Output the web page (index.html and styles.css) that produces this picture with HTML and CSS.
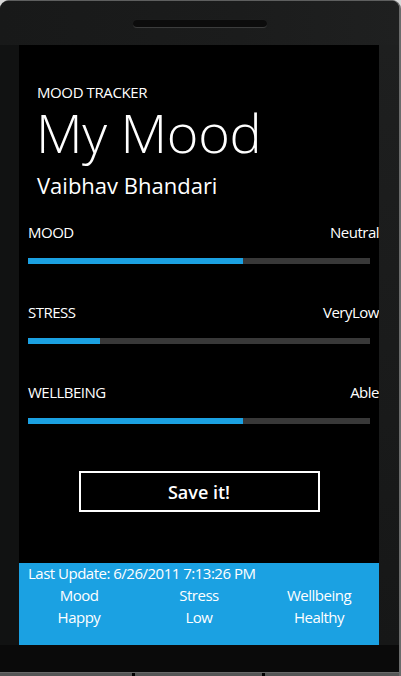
FILE: index.html
```html
<!DOCTYPE html>
<html>
<head>
<meta charset="utf-8">
<link rel="stylesheet" href="styles.css">
</head>
<body>
<div class="device">
  <div class="bezel-top"><div class="speaker"></div></div>
  <div class="middle">
    <div class="bezel-left"></div>
    <div class="screen">
      <div class="header">
        <div class="app-title">MOOD TRACKER</div>
        <div class="page-title">My Mood</div>
        <div class="subtitle">Vaibhav Bhandari</div>
      </div>
      <div class="metrics">
        <div class="metric">
          <div class="metric-row"><span>MOOD</span><span>Neutral</span></div>
          <div class="track"><div class="fill" style="width:62.9%"></div></div>
        </div>
        <div class="metric">
          <div class="metric-row"><span>STRESS</span><span>VeryLow</span></div>
          <div class="track"><div class="fill" style="width:21%"></div></div>
        </div>
        <div class="metric">
          <div class="metric-row"><span>WELLBEING</span><span>Able</span></div>
          <div class="track"><div class="fill" style="width:62.9%"></div></div>
        </div>
      </div>
      <div class="button-wrap"><button class="save">Save it!</button></div>
      <div class="status">
        <div class="updated">Last Update: 6/26/2011 7:13:26 PM</div>
        <div class="grid">
          <span>Mood</span><span>Stress</span><span>Wellbeing</span>
          <span>Happy</span><span>Low</span><span>Healthy</span>
        </div>
      </div>
    </div>
    <div class="bezel-right"></div>
  </div>
  <div class="bezel-bottom">
    <div class="bottom-edge"><span class="notch n1"></span><span class="notch n2"></span></div>
  </div>
</div>
</body>
</html>
```
FILE: styles.css
```css
* { box-sizing: border-box; }
html, body { margin: 0; padding: 0; background: #d9d9d9; }
body { width: 401px; height: 676px; overflow: hidden; font-family: "Open Sans", "Noto Sans", sans-serif; color: #fff; }

.device {
  width: 401px; height: 676px;
  display: flex; flex-direction: column;
  background: #0a0a0a;
  border-radius: 9px 9px 0 0;
  border-top: 1px solid #5e5f5f;
  border-right: 2px solid #6a6b6b;
  overflow: hidden;
}
.bezel-top {
  height: 44px;
  background: linear-gradient(90deg, #181919 0%, #1b1c1c 60%, #1f2020 100%);
  display: flex; justify-content: center; align-items: flex-start;
}
.speaker {
  margin-top: 19px;
  width: 134px; height: 8px;
  border-radius: 4px;
  background: #0c0c0c;
  border-bottom: 1px solid #3c3d3d;
  box-shadow: 0 0 1px #2a2a2a;
}
.middle { display: flex; height: 600px; }
.bezel-left { width: 19px; background: #111212; }
.bezel-right { flex: 1; background: linear-gradient(180deg, #1e1f1f 0%, #161717 100%); }

.screen {
  width: 360px; height: 600px;
  background: #000;
  display: flex; flex-direction: column;
  overflow: hidden;
}
.header { padding: 37px 0 0 18px; }
.app-title { font-size: 15px; line-height: 20px; letter-spacing: -0.4px; }
.page-title { font-size: 54px; line-height: 60px; font-weight: 300; letter-spacing: -0.3px; margin-left: -1px; }
.subtitle { font-size: 22px; line-height: 26px; margin-top: 10px; }

.metrics { margin-top: 24px; display: flex; flex-direction: column; gap: 38px; padding-left: 9px; }
.metric-row { display: flex; justify-content: space-between; font-size: 15px; line-height: 20px; letter-spacing: -0.5px; }
.track { margin-top: 16px; height: 6px; margin-right: 9px; background: #383838; }
.fill { height: 100%; background: #1ba1e2; }

.button-wrap { display: flex; justify-content: center; margin-top: 47px; }
.save {
  width: 241px; height: 41px;
  background: #000; color: #fff;
  border: 2px solid #fff;
  font-family: "Open Sans", "Noto Sans", sans-serif;
  font-size: 18px; font-weight: 600;
  padding: 0;
}

.status {
  margin-top: auto;
  height: 82px;
  background: #1ba1e2;
  padding: 0 0 0 9px;
  font-size: 15px;
  letter-spacing: -0.5px;
}
.updated { line-height: 20px; }
.grid {
  margin-top: 1px; margin-left: -9px;
  display: grid; grid-template-columns: repeat(3, 120px);
  line-height: 22px; text-align: center;
}

.bezel-bottom {
  flex: 1;
  background: #0a0a0a;
  display: flex; flex-direction: column; justify-content: flex-end;
}
.bottom-edge {
  height: 4px; background: #555656;
  border-top: 1px solid #6a6a6a;
  position: relative;
}
.notch { position: absolute; top: 0; width: 3px; height: 4px; background: #000; }
.n1 { left: 132px; }
.n2 { left: 262px; }
```
